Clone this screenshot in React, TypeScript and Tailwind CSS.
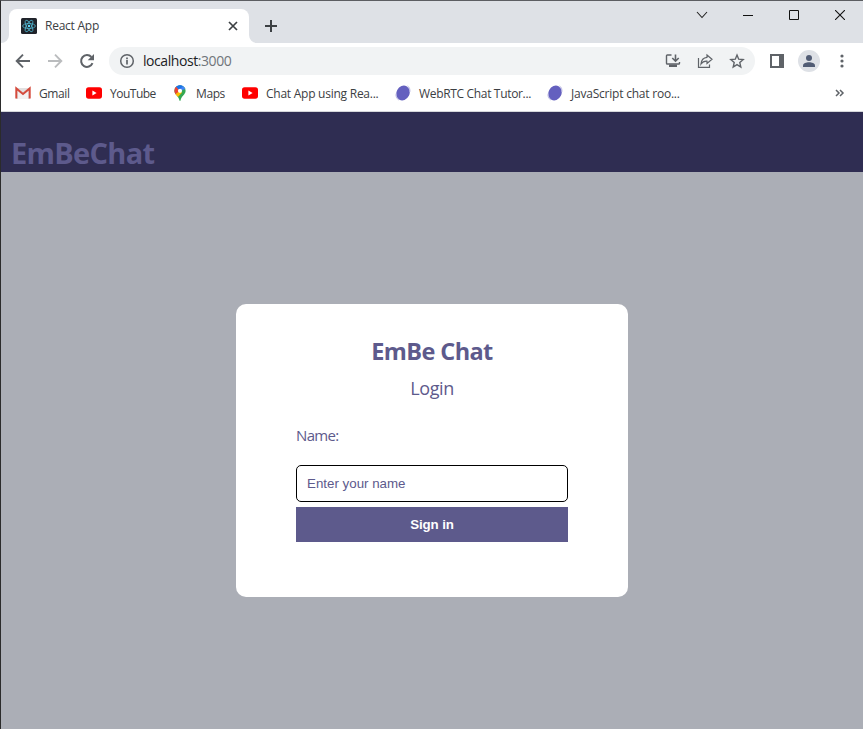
import React from "react";

const ui = "font-['Open_Sans','Noto_Sans',sans-serif]";

function ReactMark() {
  return (
    <svg width="16" height="16" viewBox="0 0 16 16" className="shrink-0">
      <rect width="16" height="16" rx="1.5" fill="#20232a" />
      <g fill="none" stroke="#4fb3cc" strokeWidth="0.8">
        <ellipse cx="8" cy="8" rx="6.4" ry="2.5" />
        <ellipse cx="8" cy="8" rx="6.4" ry="2.5" transform="rotate(60 8 8)" />
        <ellipse cx="8" cy="8" rx="6.4" ry="2.5" transform="rotate(120 8 8)" />
      </g>
      <circle cx="8" cy="8" r="1.2" fill="#61dafb" />
    </svg>
  );
}

function GmailMark() {
  return (
    <svg width="16" height="16" viewBox="0 0 16 16" className="shrink-0">
      <path d="M1 3h14v11H1z" fill="#e2e0e0" />
      <path d="M3 14V6l5 4 5-4v8z" fill="#f3f1f1" />
      <path d="M1.3 13.500V3.400L8 9l6.700-5.600v10.100" fill="none" stroke="#d54b3d" strokeWidth="2" />
    </svg>
  );
}

function YouTubeMark() {
  return (
    <svg width="16" height="16" viewBox="0 0 16 16" className="shrink-0">
      <rect x="0" y="2.300" width="16" height="11.400" rx="2.600" fill="#f00" />
      <path d="M6.400 5.600v4.800L10.600 8z" fill="#fff" />
    </svg>
  );
}

function MapsMark() {
  return (
    <svg width="16" height="16" viewBox="0 0 16 16" className="shrink-0">
      <defs>
        <clipPath id="pin">
          <path d="M8 0.200a5.600 5.600 0 0 0-5.600 5.600c0 4 4.600 5.500 5 9.600q.6.900 1.200 0c.4-4.100 5-5.600 5-9.600A5.600 5.600 0 0 0 8 .2z" />
        </clipPath>
      </defs>
      <g clipPath="url(#pin)">
        <rect width="16" height="16" fill="#34a853" />
        <path d="M0 0h16v3L8 6z" fill="#4285f4" />
        <path d="M0 0l4 1.500L8 6 3 11 0 8z" fill="#ea4335" />
        <path d="M2.500 10L8 5.500l2 2L5 13z" fill="#fbbc04" />
        <path d="M4 1l4-2 4 1-5 5z" fill="#1a73e8" />
      </g>
      <circle cx="8" cy="5.800" r="2.100" fill="#fff" />
    </svg>
  );
}

function BlobMark() {
  return (
    <svg width="16" height="16" viewBox="0 0 16 16" className="shrink-0">
      <ellipse cx="8" cy="8" rx="6.500" ry="7.600" transform="rotate(28 8 8)" fill="#6460bf" />
      <path d="M1.200 8.500c-.6 2.700.3 5 2.600 6.500M12.500 1c2 1.300 2.700 3.300 2.300 6" fill="none" stroke="#b5b3e0" strokeWidth="1" />
    </svg>
  );
}

function Bookmark({ width, text, tracking, icon }: { width: string; text: string; tracking: string; icon: React.ReactNode }) {
  return (
    <div className={`flex h-full shrink-0 items-center gap-2 ${width}`}>
      {icon}
      <span className={`whitespace-nowrap pt-px text-[12px] leading-4 text-[#3c4043] ${tracking}`}>{text}</span>
    </div>
  );
}

function Cell({ children, wide }: { children: React.ReactNode; wide?: boolean }) {
  return <div className={`flex h-8 shrink-0 items-center justify-center ${wide ? "w-[46px]" : "w-8"}`}>{children}</div>;
}

function TabStrip() {
  return (
    <div className="flex h-[42px] bg-[#dee1e6]">
      <svg width="8" height="8" className="mt-[34px] shrink-0">
        <path d="M8 0v8H0a8 8 0 0 0 8-8" fill="#fff" />
      </svg>
      <div className="mt-2 flex h-[34px] w-[240px] items-center rounded-t-lg bg-white pl-3 pr-[10px]">
        <ReactMark />
        <span className="ml-2 flex-1 text-[12px] leading-4 tracking-[-0.25px] text-[#3c4043]">React App</span>
        <svg width="12" height="12" viewBox="0 0 12 12" stroke="#3c4043" strokeWidth="1.7">
          <path d="M2 2l8 8M10 2l-8 8" />
        </svg>
      </div>
      <svg width="8" height="8" className="mt-[34px] shrink-0">
        <path d="M0 0v8h8a8 8 0 0 1-8-8" fill="#fff" />
      </svg>
      <svg width="12" height="12" viewBox="0 0 12 12" className="ml-[8px] mt-[19px]" stroke="#3c4043" strokeWidth="2">
        <path d="M6 0v12M0 6h12" />
      </svg>
      <div className="ml-auto flex h-7">
        <Cell wide>
          <svg width="12" height="12" viewBox="0 0 12 12" fill="none" stroke="#222" strokeWidth="1.1" className="-mt-1">
            <path d="M1 3l5 5.500L11 3" />
          </svg>
        </Cell>
        <Cell wide>
          <svg width="10" height="10" viewBox="0 0 10 10" className="-mt-1"><path d="M0 5h10v1H0z" fill="#111" /></svg>
        </Cell>
        <Cell wide>
          <svg width="10" height="10" viewBox="0 0 10 10" className="-mt-1" fill="none" stroke="#111"><path d="M.5.5h9v9h-9z" /></svg>
        </Cell>
        <Cell wide>
          <svg width="10" height="10" viewBox="0 0 10 10" className="-mt-1" stroke="#111" strokeWidth="1.100"><path d="M0 0l10 10M10 0L0 10" /></svg>
        </Cell>
      </div>
    </div>
  );
}

function Toolbar() {
  return (
    <div className="flex h-9 items-center pl-[6px] pr-[6px]">
      <Cell>
        <svg width="16" height="16" viewBox="0 0 16 16" fill="none" stroke="#5f6368" strokeWidth="1.9"><path d="M15 8H2.500M8 1.700L1.700 8 8 14.300" /></svg>
      </Cell>
      <Cell>
        <svg width="16" height="16" viewBox="0 0 16 16" fill="none" stroke="#babcbe" strokeWidth="1.9"><path d="M1 8h12.500M8 1.700L14.300 8 8 14.300" /></svg>
      </Cell>
      <Cell>
        <svg width="16" height="16" viewBox="0 0 16 16">
          <path d="M13.500 10.200A5.900 5.900 0 1 1 12.400 4" fill="none" stroke="#5f6368" strokeWidth="2" />
          <path d="M15 1v6.300H8.700z" fill="#5f6368" />
        </svg>
      </Cell>
      <div className="ml-[6px] flex h-7 w-[646px] items-center rounded-full bg-[#f1f3f4] pl-[10px] pr-[2px]">
        <svg width="16" height="16" viewBox="0 0 16 16" fill="none" stroke="#5f6368" strokeWidth="1.500">
          <circle cx="8" cy="8" r="6.300" />
          <path d="M8 7v4.500M8 4.500v1.700" strokeWidth="1.700" />
        </svg>
        <span className="ml-2 flex-1 text-[14px] leading-5 tracking-[-0.43px] text-[#202124]">
          localhost<span className="text-[#70757a]">:3000</span>
        </span>
        <Cell>
          <svg width="16" height="16" viewBox="0 0 16 16" fill="none" stroke="#5f6368" strokeWidth="1.400">
            <path d="M6.500 2H2.300q-.8 0-.8.8v7.400q0 .8.8.8h11.400q.8 0 .8-.8V9" />
            <path d="M10.500 1.500v6.300M7.300 5l3.200 3.200L13.700 5" strokeWidth="1.600" />
            <path d="M4 11.500h8V14H4z" fill="#5f6368" stroke="none" />
          </svg>
        </Cell>
        <Cell>
          <svg width="16" height="16" viewBox="0 0 16 16" fill="none" stroke="#5f6368" strokeWidth="1.200">
            <path d="M1.500 5v9.400h11V11.500" />
            <path d="M10 2l5 4.200-5 4.200V8.200C7.500 8 5.500 8.800 4 11 4.300 7.300 6.500 4.600 10 4.300z" />
          </svg>
        </Cell>
        <Cell>
          <svg width="16" height="16" viewBox="0 0 16 16" fill="none" stroke="#5f6368" strokeWidth="1.400">
            <path d="M8 2l1.700 4.200 4.500.4-3.400 3 1 4.400L8 11.600 4.200 14l1-4.400-3.400-3 4.500-.4z" />
          </svg>
        </Cell>
      </div>
      <div className="ml-[6px] flex">
        <Cell>
          <svg width="14" height="14" viewBox="0 0 14 14"><path d="M0 0h14v14H0zM2 2v10h7V2z" fill="#5f6368" fillRule="evenodd" /></svg>
        </Cell>
        <Cell>
          <div className="flex h-[22px] w-[22px] items-center justify-center rounded-full bg-[#dee1e6]">
            <svg width="12" height="12" viewBox="0 0 12 12" fill="#515c74"><circle cx="6" cy="3" r="3" /><path d="M0 12v-1.500C0 8.500 3.300 7.300 6 7.300s6 1.200 6 3.200V12z" /></svg>
          </div>
        </Cell>
        <Cell>
          <svg width="4" height="14" viewBox="0 0 4 14" className="ml-px" fill="#5f6368"><circle cx="2" cy="2" r="1.600" /><circle cx="2" cy="7" r="1.600" /><circle cx="2" cy="12" r="1.600" /></svg>
        </Cell>
      </div>
    </div>
  );
}

function BookmarksBar() {
  return (
    <div className="flex h-[33px] items-center border-b border-[#d5d7da] pl-[14px] pb-[4px]">
      <Bookmark width="w-[71px]" tracking="tracking-[-0.4px]" text="Gmail" icon={<GmailMark />} />
      <Bookmark width="w-[86px]" tracking="tracking-[-0.5px]" text="YouTube" icon={<YouTubeMark />} />
      <Bookmark width="w-[70px]" tracking="tracking-[-0.4px]" text="Maps" icon={<MapsMark />} />
      <Bookmark width="w-[153px]" tracking="tracking-[-0.25px]" text="Chat App using Rea..." icon={<YouTubeMark />} />
      <Bookmark width="w-[152px]" tracking="tracking-[-0.33px]" text="WebRTC Chat Tutor..." icon={<BlobMark />} />
      <Bookmark width="w-[150px]" tracking="tracking-[-0.22px]" text="JavaScript chat roo..." icon={<BlobMark />} />
      <svg width="10" height="8" viewBox="0 0 10 8" className="ml-auto mr-[18px]" fill="none" stroke="#5f6368" strokeWidth="1.500">
        <path d="M1 1l3 3-3 3M5 1l3 3-3 3" />
      </svg>
    </div>
  );
}

function LoginCard() {
  return (
    <div className="flex h-[293px] w-[392px] flex-col rounded-[10px] bg-white px-[60px] pt-[31px] text-[#5d5a8c]">
      <h2 className="text-center text-[23.5px] font-bold leading-8 tracking-[-0.6px]">EmBe Chat</h2>
      <p className="mt-[9px] text-center text-[18px] leading-6 tracking-[-0.4px]">Login</p>
      <label className="mt-[25px] text-[15px] leading-5 tracking-[-0.65px]">Name:</label>
      <input
        className="mt-[20px] h-[37px] w-full rounded-[5px] border border-black bg-white px-[10px] font-['Liberation_Sans',sans-serif] text-[13.333px] placeholder:text-[#5d5a8c]"
        placeholder="Enter your name"
      />
      <button className="mt-[5px] h-[35px] w-full bg-[#5d5a8c] font-['Liberation_Sans',sans-serif] text-[13.333px] font-bold tracking-[-0.1px] text-white">Sign in</button>
    </div>
  );
}

export default function App() {
  return (
    <div className={`flex h-[729px] w-[863px] flex-col overflow-hidden border-l border-t border-l-[#2b2b2b] border-t-[#5c5e62] bg-white ${ui}`}>
      <TabStrip />
      <Toolbar />
      <BookmarksBar />
      <header className="h-[60px] shrink-0 bg-[#2f2d52] pl-[10px] pt-[21px]">
        <h1 className="text-[29px] font-bold leading-10 tracking-[-0.7px] text-[#5d5a8c]">EmBeChat</h1>
      </header>
      <main className="flex flex-1 justify-center bg-[#abaeb6] pt-[132px]">
        <LoginCard />
      </main>
    </div>
  );
}
